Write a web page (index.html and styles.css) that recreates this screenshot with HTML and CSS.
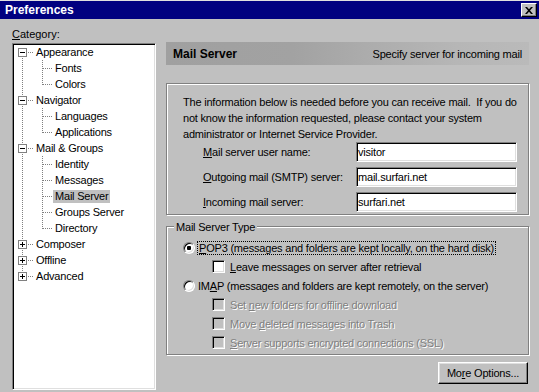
FILE: index.html
```html
<!DOCTYPE HTML>
<html>
<head>
<meta charset="UTF-8">
<link rel="stylesheet" href="styles.css">
</head>
<body>

<div class="window">

    <!-- title bar -->
    <div class="titlebar">
        <span class="title">Preferences</span>
        <span class="close-btn">
            <svg width="8" height="7" viewBox="0 0 8 7"><path d="M0 0h2l2 2.3 2-2.3h2l-3 3.5 3 3.5h-2l-2-2.3-2 2.3h-2l3-3.5z" fill="#000"/></svg>
        </span>
    </div>

    <div class="content">

        <!-- category tree -->
        <div class="left">
            <div class="cat-label"><u>C</u>ategory:</div>
            <div class="tree">
                <div class="node top first"><span class="stem"><svg class="exp" width="9" height="9"><rect x=".5" y=".5" width="8" height="8" fill="#fff" stroke="#808080"/><path d="M2 4.5h5" stroke="#000"/></svg></span><span class="txt">Appearance</span></div>
                <div class="node child"><span class="stem"></span><span class="branch"></span><span class="txt">Fonts</span></div>
                <div class="node child last"><span class="stem"></span><span class="branch"></span><span class="txt">Colors</span></div>

                <div class="node top"><span class="stem"><svg class="exp" width="9" height="9"><rect x=".5" y=".5" width="8" height="8" fill="#fff" stroke="#808080"/><path d="M2 4.5h5" stroke="#000"/></svg></span><span class="txt">Navigator</span></div>
                <div class="node child"><span class="stem"></span><span class="branch"></span><span class="txt">Languages</span></div>
                <div class="node child last"><span class="stem"></span><span class="branch"></span><span class="txt">Applications</span></div>

                <div class="node top"><span class="stem"><svg class="exp" width="9" height="9"><rect x=".5" y=".5" width="8" height="8" fill="#fff" stroke="#808080"/><path d="M2 4.5h5" stroke="#000"/></svg></span><span class="txt">Mail &amp; Groups</span></div>
                <div class="node child"><span class="stem"></span><span class="branch"></span><span class="txt">Identity</span></div>
                <div class="node child"><span class="stem"></span><span class="branch"></span><span class="txt">Messages</span></div>
                <div class="node child"><span class="stem"></span><span class="branch"></span><span class="txt selected">Mail Server</span></div>
                <div class="node child"><span class="stem"></span><span class="branch"></span><span class="txt">Groups Server</span></div>
                <div class="node child last"><span class="stem"></span><span class="branch"></span><span class="txt">Directory</span></div>

                <div class="node top"><span class="stem"><svg class="exp" width="9" height="9"><rect x=".5" y=".5" width="8" height="8" fill="#fff" stroke="#808080"/><path d="M2 4.5h5M4.5 2v5" stroke="#000"/></svg></span><span class="txt">Composer</span></div>
                <div class="node top"><span class="stem"><svg class="exp" width="9" height="9"><rect x=".5" y=".5" width="8" height="8" fill="#fff" stroke="#808080"/><path d="M2 4.5h5M4.5 2v5" stroke="#000"/></svg></span><span class="txt">Offline</span></div>
                <div class="node top last"><span class="stem"><svg class="exp" width="9" height="9"><rect x=".5" y=".5" width="8" height="8" fill="#fff" stroke="#808080"/><path d="M2 4.5h5M4.5 2v5" stroke="#000"/></svg></span><span class="txt">Advanced</span></div>
            </div>
        </div>

        <!-- panel -->
        <div class="right">
            <div class="panel-header">
                <span class="panel-title">Mail Server</span>
                <span class="panel-sub">Specify server for incoming mail</span>
            </div>

            <div class="group info">
                <p class="intro">The information below is needed before you can receive mail.&nbsp; If you do<br>not know the information requested, please contact your system<br>administrator or Internet Service Provider.</p>
                <div class="field">
                    <label><u>M</u>ail server user name:</label>
                    <input type="text" value="visitor">
                </div>
                <div class="field">
                    <label><u>O</u>utgoing mail (SMTP) server:</label>
                    <input type="text" value="mail.surfari.net">
                </div>
                <div class="field">
                    <label><u>I</u>ncoming mail server:</label>
                    <input type="text" value="surfari.net">
                </div>
            </div>

            <div class="group type">
                <div class="legend"><span>Mail Server Type</span></div>
                <div class="opt">
                    <span class="radio checked"></span>
                    <span class="focus"><u>P</u>OP3 (messages and folders are kept locally, on the hard disk)</span>
                </div>
                <div class="opt sub">
                    <span class="check"></span>
                    <span><u>L</u>eave messages on server after retrieval</span>
                </div>
                <div class="opt">
                    <span class="radio"></span>
                    <span>IM<u>A</u>P (messages and folders are kept remotely, on the server)</span>
                </div>
                <div class="opt sub disabled">
                    <span class="check"></span>
                    <span>Set <u>n</u>ew folders for offline download</span>
                </div>
                <div class="opt sub disabled">
                    <span class="check"></span>
                    <span>Move <u>d</u>eleted messages into Trash</span>
                </div>
                <div class="opt sub disabled">
                    <span class="check"></span>
                    <span><u>S</u>erver supports encrypted connections (SSL)</span>
                </div>
            </div>

            <div class="buttons">
                <span class="btn">Mo<u>r</u>e Options...</span>
            </div>
        </div>

    </div>
</div>

</body>
</html>
```

FILE: styles.css
```css
html, body {
    margin: 0;
    width: 539px;
    height: 392px;
    overflow: hidden;
}

body {
    background-color: #c0c0c0;
    font-family: "Liberation Sans", Arial, sans-serif;
    font-size: 11px;
    color: #000;
}

.window {
    border-top: 1px solid #dfdfdf;
}

/* title bar */
.titlebar {
    height: 18px;
    background-color: #000080;
    display: flex;
    align-items: center;
    justify-content: space-between;
    padding: 0 2px 0 5px;
}
.title {
    color: #fff;
    font-weight: bold;
    font-size: 12px;
}
.close-btn {
    width: 16px;
    height: 14px;
    box-sizing: border-box;
    display: flex;
    align-items: center;
    justify-content: center;
    background-color: #c0c0c0;
    border: 1px solid;
    border-color: #fff #000 #000 #fff;
    box-shadow: inset -1px -1px #808080;
}

.content {
    display: flex;
    gap: 10px;
    padding: 7px 10px 0 12px;
}

/* left column */
.left {
    width: 144px;
}
.cat-label {
    height: 16px;
    line-height: 16px;
    margin-bottom: 1px;
}
.tree {
    height: 347px;
    box-sizing: border-box;
    background-color: #fff;
    border: 1px solid;
    border-color: #808080 #fff #fff #808080;
    box-shadow: inset 1px 1px #000, inset -1px -1px #dfdfdf;
}

.node {
    display: flex;
    align-items: center;
    height: 16px;
}
.node .stem {
    width: 21px;
    height: 16px;
    flex: none;
    display: flex;
    align-items: center;
    background:
        repeating-linear-gradient(to bottom, #808080 0 1px, transparent 1px 2px) no-repeat 9px 0 / 1px 16px;
}
.node.top .stem {
    background:
        repeating-linear-gradient(to right, #808080 0 1px, transparent 1px 2px) no-repeat 15px 8px / 6px 1px,
        repeating-linear-gradient(to bottom, #808080 0 1px, transparent 1px 2px) no-repeat 9px 0 / 1px 16px;
}
.node.top.first .stem {
    background:
        repeating-linear-gradient(to right, #808080 0 1px, transparent 1px 2px) no-repeat 15px 8px / 6px 1px,
        repeating-linear-gradient(to bottom, #808080 0 1px, transparent 1px 2px) no-repeat 9px 8px / 1px 8px;
}
.node.top.last .stem {
    background:
        repeating-linear-gradient(to right, #808080 0 1px, transparent 1px 2px) no-repeat 15px 8px / 6px 1px,
        repeating-linear-gradient(to bottom, #808080 0 1px, transparent 1px 2px) no-repeat 9px 0 / 1px 8px;
}
.exp {
    display: block;
    margin-left: 5px;
}
.node .branch {
    width: 19px;
    height: 16px;
    flex: none;
    background:
        repeating-linear-gradient(to right, #808080 0 1px, transparent 1px 2px) no-repeat 9px 8px / 10px 1px,
        repeating-linear-gradient(to bottom, #808080 0 1px, transparent 1px 2px) no-repeat 8px 0 / 1px 16px;
}
.node.last .branch {
    background:
        repeating-linear-gradient(to right, #808080 0 1px, transparent 1px 2px) no-repeat 9px 8px / 10px 1px,
        repeating-linear-gradient(to bottom, #808080 0 1px, transparent 1px 2px) no-repeat 8px 0 / 1px 9px;
}
.txt {
    padding: 0 2px;
    line-height: 13px;
    white-space: nowrap;
    letter-spacing: -0.2px;
}
.txt.selected {
    background-color: #c0c0c0;
}

/* right column */
.right {
    width: 363px;
    padding-top: 16px;
    letter-spacing: -0.2px;
    white-space: nowrap;
}
.panel-header {
    height: 23px;
    display: flex;
    align-items: center;
    justify-content: space-between;
    padding: 0 7px;
    background: linear-gradient(to right, #a0a0a0 0%, #a2a2a2 35%, #acacac 55%, #b6b6b6 80%, #bababa 100%);
}
.panel-title {
    font-weight: bold;
    font-size: 12px;
    letter-spacing: 0;
}

.group {
    border: 1px solid #808080;
    box-shadow: 1px 1px #fff, inset 1px 1px #fff;
}
.info {
    margin-top: 18px;
    padding: 10px 0 2px 16px;
}
.intro {
    margin: 0;
    line-height: 16px;
}
.field {
    display: flex;
    align-items: center;
    height: 20px;
    margin-top: 5px;
}
.intro + .field {
    margin-top: 0;
}
.field label {
    width: 153px;
    margin-left: 20px;
}
.field input {
    width: 161px;
    height: 20px;
    box-sizing: border-box;
    margin: 0;
    padding: 0 1px;
    font-family: "Liberation Sans", Arial, sans-serif;
    font-size: 11px;
    letter-spacing: -0.2px;
    color: #000;
    background-color: #fff;
    border: 1px solid;
    border-color: #808080 #fff #fff #808080;
    box-shadow: inset 1px 1px #000, inset -1px -1px #dfdfdf;
    outline: none;
}

.type {
    margin-top: 11px;
    padding: 0 0 2px 16px;
}
.legend {
    margin: -8px 0 0 -9px;
    height: 16px;
    line-height: 16px;
}
.legend span {
    background-color: #c0c0c0;
    padding: 0 2px;
}
.opt {
    display: flex;
    align-items: center;
    height: 19px;
}
.legend + .opt {
    margin-top: 3px;
}
.opt.sub {
    padding-left: 29px;
}
.radio {
    width: 12px;
    height: 12px;
    box-sizing: border-box;
    border-radius: 50%;
    margin-right: 3px;
    background-color: #fff;
    border: 1px solid;
    border-color: #808080 #fff #fff #808080;
    box-shadow: inset 1px 1px #000, inset -1px -1px #dfdfdf;
}
.radio.checked {
    background: radial-gradient(circle, #000 0 2px, #fff 2.5px);
}
.focus {
    outline: 1px dotted #000;
    outline-offset: 0;
    padding: 0 1px;
}
.check {
    width: 13px;
    height: 13px;
    box-sizing: border-box;
    margin-right: 5px;
    background-color: #fff;
    border: 1px solid;
    border-color: #808080 #fff #fff #808080;
    box-shadow: inset 1px 1px #000, inset -1px -1px #dfdfdf;
}
.disabled {
    color: #808080;
    text-shadow: 1px 1px #fff;
}
.disabled .check {
    background-color: #c0c0c0;
}

.buttons {
    display: flex;
    justify-content: flex-end;
    margin-top: 7px;
    padding-right: 1px;
}
.btn {
    width: 90px;
    height: 22px;
    box-sizing: border-box;
    display: flex;
    align-items: center;
    justify-content: center;
    border: 1px solid;
    border-color: #fff #000 #000 #fff;
    box-shadow: inset -1px -1px #808080, inset 1px 1px #dfdfdf;
}
```
